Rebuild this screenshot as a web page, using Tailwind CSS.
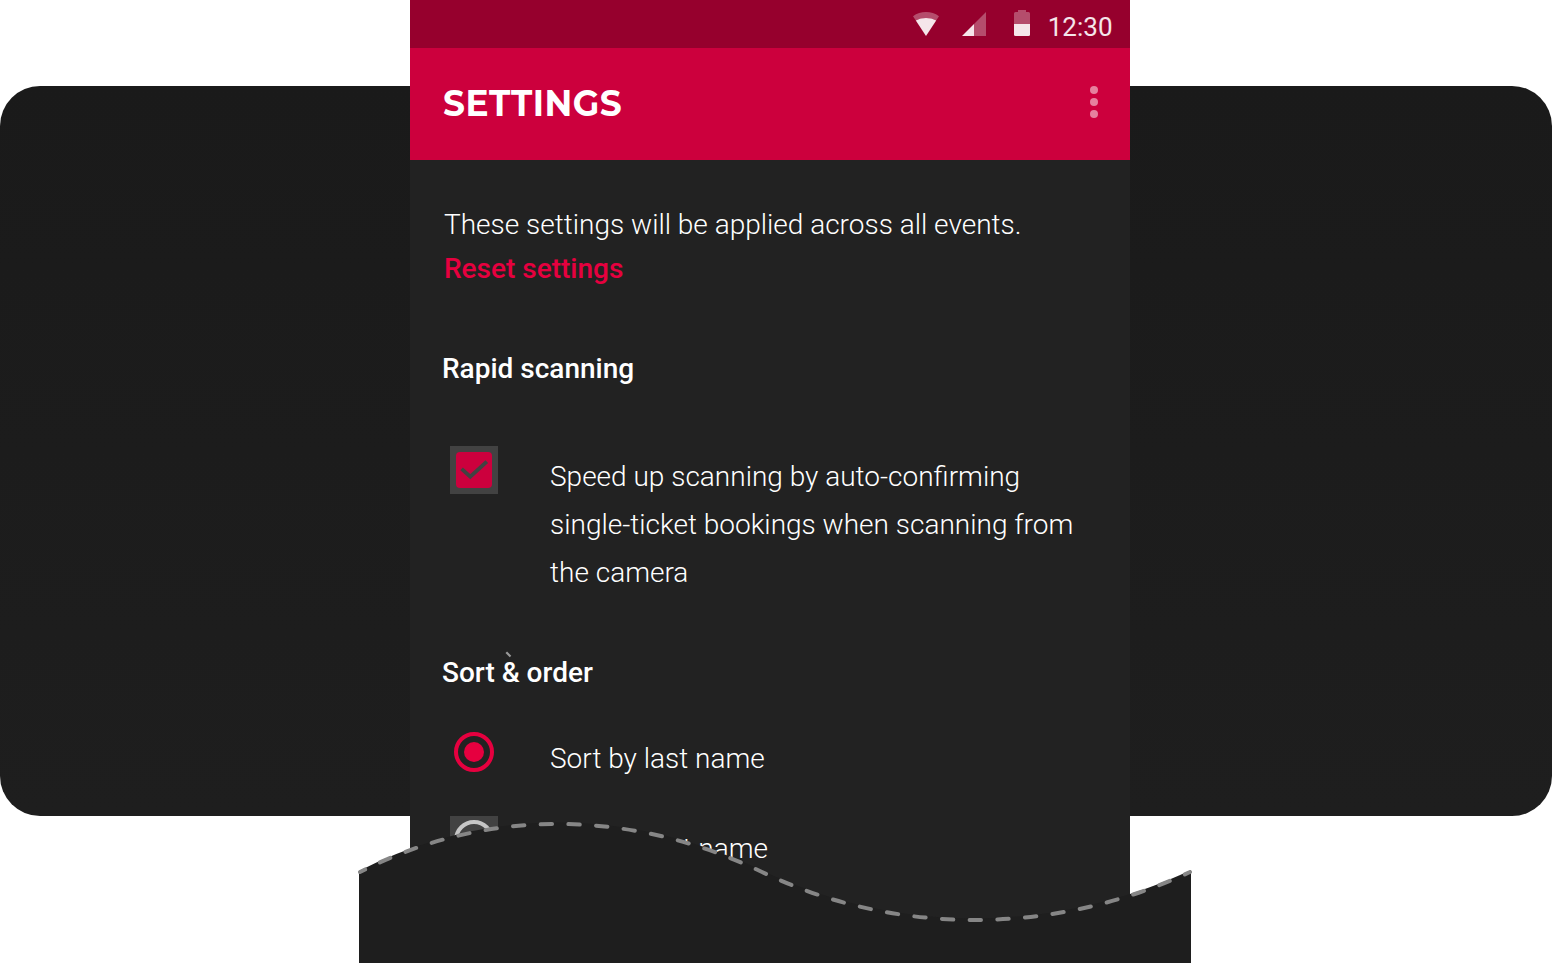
<!DOCTYPE html>
<html lang="en">
<head>
<meta charset="utf-8">
<title>Settings</title>
<script src="https://cdn.jsdelivr.net/npm/@tailwindcss/browser@4"></script>
</head>
<body class="bg-white">
<main class="relative h-[963px] w-[1552px] overflow-hidden font-['Roboto',sans-serif]">
  <div class="absolute inset-x-0 top-[86px] h-[730px] rounded-[40px] bg-linear-to-b from-[#1a1a1a] to-[#1e1e1e]"></div>

  <section class="relative ml-[410px] flex h-full w-[720px] flex-col bg-[#222222] text-[28px] text-white">
    <div class="flex h-12 shrink-0 items-center justify-end bg-[#96002d] pr-[17.5px]">
      <svg class="mr-[5.5px] h-12 w-[132px]" viewBox="0 0 132 48" fill="#fff">
        <path fill-opacity=".3" d="M3 16.2C10.500 10.700 21.500 10.700 29 16.200L26.200 20.400C20.400 17.100 11.600 17.100 5.800 20.400Z"/>
        <path fill-opacity=".9" d="M5.800 20.400C11.600 17.100 20.400 17.100 26.200 20.400L16 36Z"/>
        <path fill-opacity=".3" d="M64 24 76 12V36H64Z"/>
        <path fill-opacity=".9" d="M52 36 64 24V36Z"/>
        <path fill-opacity=".3" d="M104 24V13.500Q104 12 105.500 12H108V10H116V12H118.500Q120 12 120 13.500V24Z"/>
        <path fill-opacity=".9" d="M104 24H120V34.500Q120 36 118.500 36H105.500Q104 36 104 34.500Z"/>
      </svg>
      <span class="mt-[6px] text-[26px] leading-8 text-white/90">12:30</span>
    </div>

    <header class="flex h-28 shrink-0 items-center justify-between bg-[#cc003d] pr-8 pl-[33px]">
      <h1 class="mb-0.5 origin-left scale-x-[0.955] font-['Montserrat','Inter',sans-serif] text-[36px] leading-10 font-bold tracking-[0.5px]">SETTINGS</h1>
      <div class="mb-1 flex flex-col gap-1">
        <i class="size-2 rounded-full bg-white/50"></i>
        <i class="size-2 rounded-full bg-white/50"></i>
        <i class="size-2 rounded-full bg-white/50"></i>
      </div>
    </header>

    <div class="flex flex-col pt-[43px] pl-8 whitespace-nowrap">
      <p class="ml-0.5 leading-[44px] font-light"><span>These settings will be applied across all events.</span></p>
      <p class="ml-0.5 leading-[44px] font-medium text-[#e6003f]"><span>Reset settings</span></p>
      <h2 class="mt-14 leading-[44px] font-medium"><span>Rapid scanning</span></h2>
      <div class="mt-[55px] flex pl-2">
        <svg class="size-12" viewBox="0 0 48 48">
          <path fill="#424242" d="M0 0H48V48H0Z"/>
          <rect x="6" y="6" width="36" height="36" rx="4" fill="#cc003d"/>
          <path d="M11.600 22.900 20.300 30.700 36.800 15.600" fill="none" stroke="#424242" stroke-width="3.900"/>
        </svg>
        <p class="mt-[7px] ml-[52px] leading-[48px] font-light"><span>Speed up scanning by auto-confirming</span><br><span>single-ticket bookings when scanning from</span><br><span>the camera</span></p>
      </div>
      <h2 class="relative mt-[54px] leading-[44px] font-medium"><span>Sort &amp; order</span>
        <svg class="absolute top-0 left-[62px] size-2" viewBox="0 0 8 8"><path d="M2.300 1.300 6.500 5.500" stroke="#999" stroke-width="2.200"/></svg>
      </h2>
      <div class="mt-[33px] flex pl-2">
        <svg class="size-12" viewBox="0 0 48 48"><circle cx="24" cy="24" r="18" fill="none" stroke="#e6003f" stroke-width="4"/><circle cx="24" cy="24" r="10" fill="#e6003f"/></svg>
        <p class="mt-[7px] ml-[52px] leading-[48px] font-light"><span>Sort by last name</span></p>
      </div>
      <div class="mt-[33px] flex pl-2">
        <svg class="size-12" viewBox="0 0 48 48"><path fill="#424242" d="M0 0H48V48H0Z"/><circle cx="24" cy="24" r="18" fill="none" stroke="#c6c6c6" stroke-width="4"/></svg>
        <p class="mt-[9px] ml-[52px] leading-[48px] font-light"><span>Sort by first name</span></p>
      </div>
    </div>
  </section>

  <svg class="absolute top-[800px] left-0 h-[163px] w-[1552px]" viewBox="0 800 1552 163">
    <path fill="#1e1e1e" d="M359 871L360 870.500C485 806.500 629 806.500 762 870.500C895 934.500 1053 934.500 1190 870.500L1191 870V963H359Z"/>
    <path fill="none" stroke="#868686" stroke-width="4" stroke-linecap="round" pathLength="868" stroke-dasharray="11.500 16.500" stroke-dashoffset="5.750" d="M360 872C485 808 629 808 762 872C895 936 1053 936 1190 872"/>
  </svg>
</main>
</body>
</html>
